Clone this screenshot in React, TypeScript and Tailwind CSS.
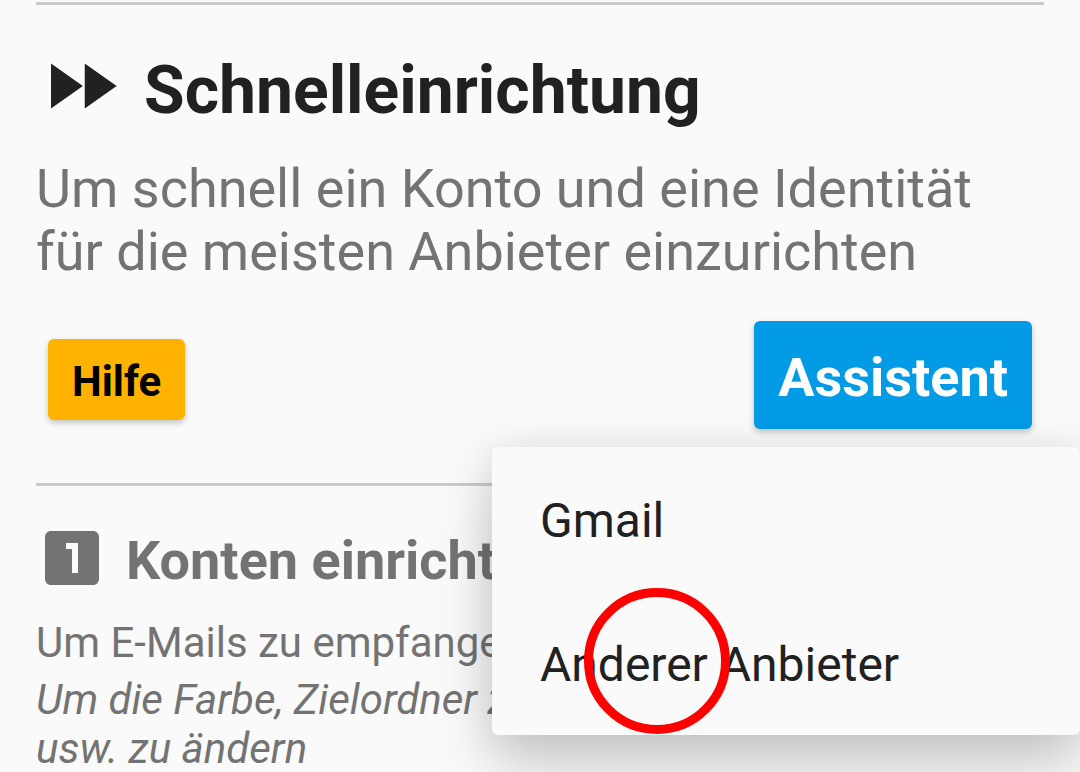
import React from "react";

function FastForwardIcon() {
  return (
    <svg viewBox="0 0 24 24" className="size-[90px] shrink-0" fill="currentColor" aria-hidden="true">
      <path d="M4 18l8.5-6L4 6v12zm9-12v12l8.5-6L13 6z" />
    </svg>
  );
}

function StepOneIcon() {
  return (
    <svg viewBox="0 0 24 24" className="size-[72px] shrink-0" fill="currentColor" aria-hidden="true">
      <path d="M19 3H5c-1.1 0-2 .9-2 2v14c0 1.1.9 2 2 2h14c1.1 0 2-.9 2-2V5c0-1.1-.9-2-2-2zm-5 14h-2V9h-2V7h4v10z" />
    </svg>
  );
}

function ProviderMenu() {
  return (
    <div
      role="menu"
      className="absolute top-full right-0 z-10 mt-[18px] flex w-[588px] flex-col rounded-md bg-[#fafafa] text-[48px] leading-[56px] text-[#212121] shadow-[0_30px_60px_rgba(0,0,0,0.2),0_0_36px_rgba(0,0,0,0.08)]"
    >
      <button type="button" role="menuitem" className="px-12 pt-[46px] pb-[42px] text-left">
        Gmail
      </button>
      <button type="button" role="menuitem" className="relative px-12 pt-[46px] pb-[42px] text-left">
        Anderer Anbieter
        <span className="absolute top-[-3px] left-[92px] size-[146px] rounded-full border-9 border-[#ff0000]" />
      </button>
    </div>
  );
}

export default function App() {
  return (
    <main className="h-screen overflow-hidden bg-[#fafafa] pt-[2px] font-['Roboto',sans-serif] text-[#737373]">
      <hr className="mx-9 border-t-3 border-[#cacaca]" />

      <section>
        <div className="mx-9 mt-9 flex items-center gap-[18px] text-[#212121]">
          <FastForwardIcon />
          <h1 className="pt-[9px] text-[66px] leading-[78px] font-bold">Schnelleinrichtung</h1>
        </div>
        <p className="mx-9 mt-[26px] text-[54px] leading-[63px]">
          Um schnell ein Konto und eine Identität für die meisten Anbieter einzurichten
        </p>
        <div className="relative mt-[38px]">
          <div className="flex items-baseline justify-between px-12">
            <button
              type="button"
              className="rounded-md bg-[#ffb300] px-6 pt-[18px] pb-[14px] text-[42px] leading-[49px] font-bold text-black shadow-[0_3px_6px_rgba(0,0,0,0.22)]"
            >
              Hilfe
            </button>
            <button
              type="button"
              aria-haspopup="menu"
              aria-expanded="true"
              className="rounded-md bg-[#039be5] px-6 pt-[25px] pb-5 text-[54px] leading-[63px] font-bold text-white shadow-[0_3px_6px_rgba(0,0,0,0.22)]"
            >
              Assistent
            </button>
          </div>
          <ProviderMenu />
        </div>
      </section>

      <hr className="mx-9 mt-[54px] border-t-3 border-[#cacaca]" />

      <section className="mx-9 mt-9">
        <div className="flex items-center gap-[18px]">
          <StepOneIcon />
          <h2 className="pt-[5px] text-[54px] leading-[63px] font-bold">Konten einrichten</h2>
        </div>
        <p className="mt-6 text-[42px] leading-[49px]">Um E-Mails zu empfangen</p>
        <p className="mt-2 text-[42px] leading-[49px] italic">
          Um die Farbe, Zielordner z
          <br />
          usw. zu ändern
        </p>
      </section>
    </main>
  );
}
